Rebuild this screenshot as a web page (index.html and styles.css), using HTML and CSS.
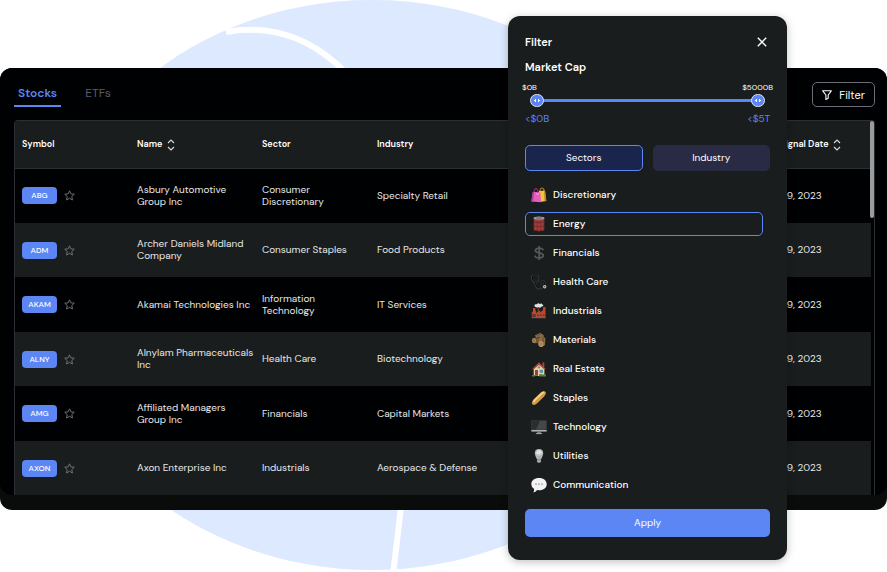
FILE: index.html
```html
<!DOCTYPE html>
<html lang="en">
<head>
<meta charset="utf-8">
<title>Stocks</title>
<link rel="stylesheet" href="styles.css">
</head>
<body>
<svg class="backdrop" viewBox="0 0 654 570" aria-hidden="true">
  <ellipse cx="327" cy="285" rx="327" ry="285" fill="#dce9ff"/>
  <path d="M181 32C232 23 272 42 304 76C395 170 372 380 348 574" fill="none" stroke="#fff" stroke-width="6"/>
</svg>
<svg class="defs" aria-hidden="true">
  <symbol id="star" viewBox="0 0 12 12"><path d="M6 .9 7.5 4.2 11.2 4.6 8.5 7.1 9.2 10.9 6 9 2.8 10.9 3.5 7.1 .8 4.6 4.5 4.2Z" fill="none" stroke="#777a80" stroke-linejoin="round"/></symbol>
  <symbol id="sort" viewBox="0 0 8 12"><path d="M1 4 4 1 7 4M1 8 4 11 7 8" fill="none" stroke="#d5d7d8" stroke-width="1.2"/></symbol>
</svg>

<main class="app">
  <div class="screen">
    <header class="bar">
      <nav class="tabs">
        <a class="tab active" href="#stocks">Stocks</a>
        <a class="tab" href="#etfs">ETFs</a>
      </nav>
      <button class="filter-button" type="button">
        <svg width="10" height="10" viewBox="0 0 10 10"><path d="M.7.8H9.3L6.2 5V8.3L3.9 9.4V5Z" fill="none" stroke="#fff" stroke-width="1.1" stroke-linejoin="round"/></svg>
        Filter
      </button>
    </header>
    <div class="table-box">
      <table>
        <colgroup><col class="c-symbol"><col class="c-name"><col class="c-sector"><col><col class="c-date"></colgroup>
        <thead>
          <tr><th>Symbol</th><th>Name <svg class="sort"><use href="#sort"/></svg></th><th>Sector</th><th>Industry</th><th>Signal Date <svg class="sort"><use href="#sort"/></svg></th></tr>
        </thead>
        <tbody>
          <tr><td><div class="symbol"><a class="ticker" href="#abg">ABG</a><svg class="star"><use href="#star"/></svg></div></td><td>Asbury Automotive<br>Group Inc</td><td>Consumer<br>Discretionary</td><td>Specialty Retail</td><td>09, 2023</td></tr>
          <tr><td><div class="symbol"><a class="ticker" href="#adm">ADM</a><svg class="star"><use href="#star"/></svg></div></td><td>Archer Daniels Midland<br>Company</td><td>Consumer Staples</td><td>Food Products</td><td>09, 2023</td></tr>
          <tr><td><div class="symbol"><a class="ticker" href="#akam">AKAM</a><svg class="star"><use href="#star"/></svg></div></td><td>Akamai Technologies Inc</td><td>Information<br>Technology</td><td>IT Services</td><td>09, 2023</td></tr>
          <tr><td><div class="symbol"><a class="ticker" href="#alny">ALNY</a><svg class="star"><use href="#star"/></svg></div></td><td>Alnylam Pharmaceuticals<br>Inc</td><td>Health Care</td><td>Biotechnology</td><td>09, 2023</td></tr>
          <tr><td><div class="symbol"><a class="ticker" href="#amg">AMG</a><svg class="star"><use href="#star"/></svg></div></td><td>Affiliated Managers<br>Group Inc</td><td>Financials</td><td>Capital Markets</td><td>09, 2023</td></tr>
          <tr><td><div class="symbol"><a class="ticker" href="#axon">AXON</a><svg class="star"><use href="#star"/></svg></div></td><td>Axon Enterprise Inc</td><td>Industrials</td><td>Aerospace &amp; Defense</td><td>09, 2023</td></tr>
        </tbody>
      </table>
      <div class="scroll-thumb"></div>
    </div>
  </div>
</main>

<aside class="panel">
  <div class="panel-head">
    <h2>Filter</h2>
    <button class="close" type="button" aria-label="Close"><svg width="10" height="10" viewBox="0 0 10 10"><path d="M.8.8 9.2 9.2M9.2.8.8 9.2" stroke="#fff" stroke-width="1.4"/></svg></button>
  </div>
  <h3>Market Cap</h3>
  <div class="limits"><label for="cap-min">$0B</label><label for="cap-max">$5000B</label></div>
  <div class="slider">
    <input id="cap-min" type="range" min="0" max="5000" value="0">
    <input id="cap-max" type="range" min="0" max="5000" value="5000">
  </div>
  <div class="values"><span>&lt;$0B</span><span>&lt;$5T</span></div>
  <div class="switch">
    <button class="choice chosen" type="button">Sectors</button>
    <button class="choice" type="button">Industry</button>
  </div>
  <div class="sectors">
    <button class="sector" type="button"><svg class="icon" viewBox="0 0 16 16"><path d="M9 5V3q0-2 2-2t2 2v2" fill="none" stroke="#b98b2c"/><path d="M8 4 14 3.6 15.3 14 9 15Z" fill="#f2c43c"/><path d="M13 4 14 3.6 15.3 14 13.6 14.3Z" fill="#b98724"/><path d="M2.5 6Q4 .5 5.5 1.5T7.3 6" fill="none" stroke="#c92c94"/><path d="M1.8 5 9.3 5.4 10 15.2 .3 14.5Z" fill="#e65cc0"/><path d="M1.8 5 3 5.1 2.2 14.6 .3 14.5Z" fill="#b43c95"/><path d="M5 5.3 6.6 8 8 5.4" fill="none" stroke="#ffa4df" stroke-width=".8"/></svg>Discretionary</button>
    <button class="sector selected" type="button"><svg class="icon" viewBox="0 0 16 16"><path d="M2.7 2V14.2Q8 16.4 13.3 14.2V2Z" fill="#8e3434"/><path d="M4.8 3V14.7M8 3V15M11.2 3V14.7" stroke="#a8443f" stroke-width="1.2"/><path d="M2.7 5.8Q8 7.6 13.3 5.8M2.7 10Q8 11.8 13.3 10M2.7 14Q8 16 13.3 14" fill="none" stroke="#702629" stroke-width=".8"/><ellipse cx="8" cy="2" rx="5.5" ry="1.6" fill="#a7aaa5"/><ellipse cx="8" cy="2" rx="4" ry=".8" fill="#6b706d"/></svg>Energy</button>
    <button class="sector" type="button"><svg class="icon" viewBox="0 0 16 16"><path d="M12.2 5.2Q11.5 3.2 8.2 3.2T4.4 5.5Q4.4 7.3 8.2 7.9T12.3 10.6Q12.3 12.9 8.2 12.9T4 10.5M8.2 1V15" fill="none" stroke="#55595a" stroke-width="1.7"/></svg>Financials</button>
    <button class="sector" type="button"><svg class="icon" viewBox="0 0 16 16"><path d="M3 1.2 1.3 2Q.5 6.5 3.8 8.7 8 7.5 7.2 2.2L5.7 1.2M3.8 8.7Q5.5 14.7 8.5 14.6T10.3 10.8Q9.8 6.7 12 7T13.7 12" fill="none" stroke="#464b4c" stroke-width="1.7"/><path d="M3 1.3 1.4 2.2Q.8 6.5 3.8 8.5 7.7 7.3 7 2.2L5.7 1.3M4 9Q5.5 14.4 8.5 14.3T10 10.8Q9.6 6.8 12 7.2T13.5 12" fill="none" stroke="#050606" stroke-width="1"/><circle cx="13.7" cy="12.8" r="1.7" fill="#c3c7c7"/><circle cx="13.7" cy="12.8" r=".8" fill="#555"/></svg>Health Care</button>
    <button class="sector" type="button"><svg class="icon" viewBox="0 0 16 16"><path d="M2.2 5H4.2L4.8 11H1.6Z" fill="#c44f32"/><path d="M6.7 5H8.2V9H6.5Z" fill="#803524"/><path d="M.8 9.2 5 7.8V10L9.2 7.6V9.6L12 7V4H14.5V14.8H.8Z" fill="#b9492d"/><path d="M.8 11H5V14.8H.8Z" fill="#853529"/><path d="M2 12H4V14H2ZM6.3 11.5H8V13H6.3ZM9 11.5H10.7V13H9ZM12 11.5H13.5V13H12Z" fill="#413f45"/><path d="M3.5 3.3Q3 .8 5.8 1.2 7.3-.5 8.8 1 11-.2 11.4 1.6 13.5 2.5 11 3.6 9 5.4 7.5 4.2 4.6 5 3.5 3.3Z" fill="#dce3e6"/><path d="M.8 14.5H14.7V15.2H.8Z" fill="#737779"/></svg>Industrials</button>
    <button class="sector" type="button"><svg class="icon" viewBox="0 0 16 16"><path d="M4 3.3 9.2.8 12.8 3.2 11 7 5.8 8Z" fill="#8b6c49"/><path d="M1.4 6.6 8.2 4.5 11 6 11.2 10 4.2 11.6 1.2 10Z" fill="#755436"/><path d="M7.8 6.4 11.8 3.6 14.4 6.4 14 13 11 15 7.4 12.6Z" fill="#8b6a47"/><ellipse cx="3" cy="8.5" rx="2" ry="2.5" fill="#a98961"/><ellipse cx="3" cy="8.5" rx="1" ry="1.4" fill="#8f6f4b"/><ellipse cx="9.9" cy="12" rx="2.5" ry="2.9" fill="#b7966a"/><ellipse cx="9.9" cy="12" rx="1.3" ry="1.7" fill="#a18059"/><path d="M5.7 3.5 10 1.7M5 6.5 9 5.3M11.8 5 12.2 10" stroke="#503923" stroke-width=".7"/></svg>Materials</button>
    <button class="sector" type="button"><svg class="icon" viewBox="0 0 16 16"><path d="M11.5 1.3H13.3V6H11.5Z" fill="#a94637"/><path d="M2.7 7 8 2.2 13.4 7V15H2.7Z" fill="#e4d2a5"/><path d="M1.2 8 8 1.2 14.7 8 13.6 8.8 8 4 2.3 8.8Z" fill="#b3473e"/><path d="M4 9H7V14.8H4Z" fill="#864a31"/><path d="M8.7 8.8H12V11.8H8.7Z" fill="#4f91b2"/><path d="M6.8 5.5H9V7.3H6.8Z" fill="#4f91b2"/><path d="M1 14H4V15.4H1ZM8 13.5Q10 12.7 12 13.5L15 13.2V15.4H8Z" fill="#5a7c3c"/></svg>Real Estate</button>
    <button class="sector" type="button"><svg class="icon" viewBox="0 0 16 16"><path d="M1.4 14.3Q-.2 12.5 2.8 9.3L9.7 2.6Q12.7.3 14.3 1.7T13.1 6.4L6.2 13.2Q3.2 15.9 1.4 14.3Z" fill="#d99a42"/><path d="M2.6 12.1Q3 10.7 5 8.8L10.5 3.8Q12.5 2 13.3 2.7" fill="none" stroke="#f7d58b" stroke-width="1.8"/><path d="M5 10 6 11M7.6 7.5 8.6 8.5M10.2 5.2 11.2 6.2" stroke="#c98a3a" stroke-width=".8"/></svg>Staples</button>
    <button class="sector" type="button"><svg class="icon" viewBox="0 0 16 16"><path d="M.4 1.5H15.6V12.5H.4Z" fill="#4a4d4f"/><path d="M.8 1.9H15.2V10.7H.8Z" fill="#2b2d2e"/><path d="M9 2H15V10.6H5Z" fill="#454849"/><path d="M.4 11H15.6V12.5H.4Z" fill="#aeb2b4"/><path d="M6.4 12.5H9.6L10.2 14.5H5.8Z" fill="#777c7f"/><path d="M4.8 14.3H11.2V15.1H4.8Z" fill="#bfc3c5"/></svg>Technology</button>
    <button class="sector" type="button"><svg class="icon" viewBox="0 0 16 16"><path d="M3.8 5.2Q3.9 1 8 1T12.2 5.2Q12.2 7.1 10.2 11H5.8Q3.8 7.1 3.8 5.2Z" fill="#b8bbbb"/><path d="M5.2 4.6Q5.5 2.1 8 2.1T10.7 4.8Q10 7 8.9 8.2H7Q5.4 6.7 5.2 4.6Z" fill="#e0e2e2"/><path d="M7 6V10.5M9 6V10.5" stroke="#8f9292" stroke-width=".6"/><path d="M6 11H10V13.6L9 15H7L6 13.6Z" fill="#7e8282"/><path d="M6 12.2H10M6 13.5H10" stroke="#ccd0d0" stroke-width=".5"/></svg>Utilities</button>
    <button class="sector" type="button"><svg class="icon" viewBox="0 0 16 16"><path d="M8 1C12.8 1 15.7 3.7 15.7 7.2S12.8 13.2 8 13.2L6.2 13.1Q4.6 15.3 2.2 15.5 3.4 14.2 3.1 12 .3 10.3.3 7.2C.3 3.7 3.2 1 8 1Z" fill="#f2f2f2"/><path d="M4.3 6.4H5.7V7.8H4.3ZM7.3 6.4H8.7V7.8H7.3ZM10.3 6.4H11.7V7.8H10.3Z" fill="#858989"/></svg>Communication</button>
  </div>
  <button class="apply" type="button">Apply</button>
</aside>
</body>
</html>
```
FILE: styles.css
```css
* { box-sizing: border-box; }
body {
  margin: 0;
  min-height: 572px;
  position: relative;
  overflow: hidden;
  background: #fff;
  color: #fff;
  font-family: "DM Sans", Inter, "Liberation Sans", sans-serif;
  font-size: 10px;
  line-height: 12px;
}
button { margin: 0; padding: 0; border: 0; background: none; color: inherit; font: inherit; cursor: pointer; }
a { color: inherit; text-decoration: none; }
svg { display: block; }
.defs { position: absolute; width: 0; height: 0; }
.backdrop { position: absolute; left: 45px; top: 0; width: 654px; height: 570px; }

.app { position: relative; margin-top: 68px; padding-bottom: 15px; border-radius: 12px; background: #0a0c0b; }
.screen { padding: 14px 12px 0 14px; border-radius: 12px; background: #000103; overflow: hidden; }
.bar { display: flex; justify-content: space-between; height: 38px; align-items: flex-start; }
.tabs { display: flex; gap: 20px; }
.tab { height: 25px; padding: 0 4px; color: #5b5e67; font-size: 12px; line-height: 23px; }
.tab.active { color: #5b86f3; font-weight: 600; border-bottom: 2px solid #5b86f3; }
.filter-button {
  display: flex; align-items: center; justify-content: center; gap: 7px;
  width: 63px; height: 25px; border: 1px solid #6b6e78; border-radius: 5px; font-size: 11px;
}

.table-box { position: relative; padding-right: 3px; border: 1px solid #2b3036; border-bottom: 0; border-radius: 4px 4px 0 0; }
table { width: 100%; table-layout: fixed; border-collapse: collapse; }
.c-symbol, .c-sector { width: 115px; }
.c-name { width: 125px; }
.c-date { width: 98px; }
th, td { padding: 0 0 0 7px; text-align: left; vertical-align: middle; white-space: nowrap; }
th { height: 47px; background: #191d1e; border-bottom: 1px solid #2b3036; font-size: 9px; font-weight: 600; }
tbody tr { height: 55px; color: #e6e7e8; }
tbody tr:nth-child(even) { height: 54px; background: #191d1e; }
tbody tr:last-child { background: #191d1e; }
.sort { display: inline-block; width: 8px; height: 12px; margin-left: 2px; vertical-align: middle; }
.symbol { display: flex; align-items: center; gap: 7px; }
.ticker { width: 35px; height: 17px; border-radius: 4px; background: #5b86f3; color: #fff; font-size: 8px; font-weight: 500; line-height: 17px; text-align: center; }
.star { width: 11px; height: 11px; }
.scroll-thumb { position: absolute; top: 0; right: 0; width: 4px; height: 97px; border-radius: 2px; background: #9a9b9c; }

.panel {
  position: absolute; top: 16px; right: 100px; width: 279px; padding: 17px 17px 23px;
  border-radius: 12px; background: #191d1e; box-shadow: 0 2px 8px rgba(0, 0, 0, .25);
}
.panel-head { display: flex; align-items: center; justify-content: space-between; height: 18px; padding-right: 3px; }
h2, h3 { margin: 0; font-size: 11px; line-height: 18px; font-weight: 600; }
h3 { margin-top: 7px; }
.limits { display: flex; justify-content: space-between; margin: 5px -3px 0; font-size: 8px; }
.slider { display: grid; height: 14px; padding: 0 5px; background: linear-gradient(#5b86f3, #5b86f3) center / 220px 3px no-repeat; }
.slider input {
  grid-area: 1 / 1; width: 100%; height: 14px; margin: 0;
  appearance: none; background: none; pointer-events: none;
}
.slider input::-webkit-slider-thumb {
  appearance: none; width: 14px; height: 13px; border: 1px solid #dfe5f6; border-radius: 7px; pointer-events: auto;
  background:
    conic-gradient(from 45deg at 0 50%, #fff 90deg, transparent 0) 3px 4px / 2px 3px no-repeat,
    conic-gradient(from 225deg at 100% 50%, #fff 90deg, transparent 0) 7px 4px / 2px 3px no-repeat,
    #5b86f3;
}
.values { display: flex; justify-content: space-between; margin-top: 6px; color: #5b86f3; }
.switch { display: grid; grid-template-columns: 1fr 1fr; gap: 10px; margin-top: 20px; }
.choice { height: 26px; border: 1px solid #292b45; border-radius: 5px; background: #292b45; }
.choice.chosen { border-color: #5b86f3; background: #19254c; }
.sectors { display: grid; gap: 5px; margin: 12px 7px 0 0; }
.sector { display: flex; align-items: center; gap: 6px; height: 24px; padding: 0 5px; border: 1px solid transparent; border-radius: 5px; font-weight: 500; }
.sector.selected { border-color: #5b86f3; }
.icon { width: 16px; height: 16px; }
.apply { width: 100%; height: 28px; margin-top: 12px; border-radius: 5px; background: #5b86f3; }
```
